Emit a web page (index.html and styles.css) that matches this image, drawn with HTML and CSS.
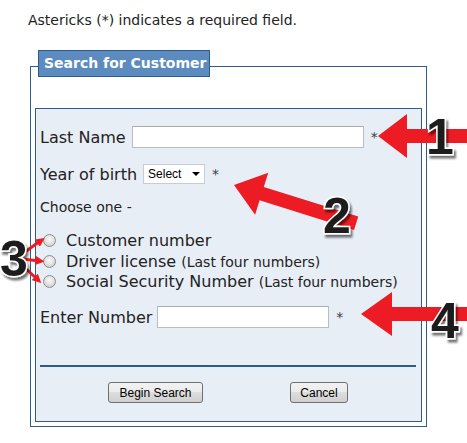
FILE: index.html
```html
<!DOCTYPE html>
<html lang="en">
<head>
<meta charset="utf-8">
<title>Search for Customer</title>
<link rel="stylesheet" href="styles.css">
</head>
<body>
<p class="note">Astericks (*) indicates a required field.</p>
<div class="outer">
  <div class="legend">Search for Customer</div>
  <form class="inner">
    <div class="row r-last">
      <label class="lbl">Last Name</label>
      <input class="text w-last" type="text">
      <span class="req">*</span>
    </div>
    <div class="row r-year">
      <label class="lbl">Year of birth</label>
      <span class="select-wrap"><select class="select"><option>Select</option></select></span>
      <span class="req">*</span>
    </div>
    <div class="choose">Choose one -</div>
    <div class="radios">
      <label class="radio"><input type="radio" name="idtype"><span>Customer number</span></label>
      <label class="radio"><input type="radio" name="idtype"><span>Driver license <small>(Last four numbers)</small></span></label>
      <label class="radio"><input type="radio" name="idtype"><span>Social Security Number <small>(Last four numbers)</small></span></label>
    </div>
    <div class="row r-num">
      <label class="lbl lbl-num">Enter Number</label>
      <input class="text w-num" type="text">
      <span class="req">*</span>
    </div>
    <hr class="sep">
    <div class="buttons">
      <button class="btn b-search" type="button">Begin Search</button>
      <button class="btn b-cancel" type="button">Cancel</button>
    </div>
  </form>
</div>
<svg class="annot" viewBox="0 0 467 443" xmlns="http://www.w3.org/2000/svg">
  <defs>
    <filter id="sh" x="-30%" y="-30%" width="160%" height="160%">
      <feDropShadow dx="2" dy="3" stdDeviation="1.2" flood-color="#000" flood-opacity="0.55"/>
    </filter>
    <marker id="ah" markerWidth="3" markerHeight="3" refX="1.5" refY="1.5" orient="auto" markerUnits="strokeWidth">
      <path d="M0 0 L3 1.5 L0 3 Z" fill="#ed1c24"/>
    </marker>
  </defs>
  <path class="arrow" transform="translate(378 136)" d="M0 0 L29 -22 L29 -7 L100 -7 L100 7 L29 7 L29 22 Z"/>
  <path class="arrow" transform="translate(234 185) rotate(17.4)" d="M0 0 L29 -22 L29 -7 L128 -7 L128 7 L29 7 L29 22 Z"/>
  <path class="arrow" transform="translate(361 314)" d="M0 0 L31 -22 L31 -7 L120 -7 L120 7 L31 7 L31 22 Z"/>
  <path class="small-arrow" d="M22 254 L41 240.5" marker-end="url(#ah)"/>
  <path class="small-arrow" d="M22 259 L40 261" marker-end="url(#ah)"/>
  <path class="small-arrow" d="M22 265 L38 280" marker-end="url(#ah)"/>
  <text class="digit" x="440" y="154" filter="url(#sh)">1</text>
  <text class="digit" x="337" y="233" filter="url(#sh)">2</text>
  <text class="digit" x="14" y="276" filter="url(#sh)">3</text>
  <text class="digit" x="445" y="338" filter="url(#sh)">4</text>
</svg>
</body>
</html>
```
FILE: styles.css
```css
body {
  margin: 0;
  position: relative;
  width: 467px;
  height: 443px;
  overflow: hidden;
  background: #fff;
  color: #222;
  font-family: "DejaVu Sans", Verdana, sans-serif;
}

.note {
  margin: 12px 0 0 28px;
  font-size: 14px;
  line-height: 17px;
}

.outer {
  position: relative;
  margin: 37px 0 0 30px;
  width: 397px;
  box-sizing: border-box;
  border: 1px solid #2f5b88;
  padding: 41px 4px 4px;
}

.legend {
  position: absolute;
  top: -17px;
  left: 7px;
  width: 172px;
  height: 27px;
  box-sizing: border-box;
  border: 1px solid #2f5b88;
  background: #5b8bbf;
  color: #fff;
  font-weight: bold;
  font-size: 14px;
  line-height: 25px;
  padding-left: 5px;
}

.inner {
  margin: 0;
  box-sizing: border-box;
  height: 314px;
  border: 1px solid #2f5b88;
  background: #e8eef6;
  padding: 17px 5px 0 4px;
  display: flex;
  flex-direction: column;
}

.row {
  display: flex;
  align-items: center;
  font-size: 16px;
}

.lbl {
  margin-right: 6px;
}

.lbl-num {
  margin-right: 5px;
}

.text {
  box-sizing: border-box;
  height: 22px;
  margin: 0;
  padding: 0 3px;
  border: 1px solid #b9bcc3;
  border-top-color: #a9acb3;
  background: #fff;
  border-radius: 0;
}

.w-last {
  width: 232px;
}

.w-num {
  width: 172px;
}

.req {
  margin-left: 7px;
  font-size: 14px;
  color: #3a3d4a;
}

.r-last {
  height: 22px;
}

.r-year {
  height: 20px;
  margin-top: 16px;
}

.select-wrap {
  position: relative;
  display: inline-block;
  height: 20px;
}

.select {
  -webkit-appearance: none;
  appearance: none;
  display: block;
  width: 62px;
  height: 20px;
  box-sizing: border-box;
  margin: 0;
  padding: 0 0 0 4px;
  border: 1px solid #c8cbd1;
  border-radius: 0;
  background: #fff;
  color: #000;
  font-family: "Liberation Sans", Arial, sans-serif;
  font-size: 12px;
}

.select-wrap::after {
  content: "";
  position: absolute;
  right: 5px;
  top: 8px;
  border-left: 4px solid transparent;
  border-right: 4px solid transparent;
  border-top: 4px solid #000;
}

.choose {
  margin-top: 13px;
  font-size: 14px;
  line-height: 20px;
}

.radios {
  margin-top: 13.5px;
  display: flex;
  flex-direction: column;
}

.radio {
  display: flex;
  align-items: center;
  height: 20.5px;
  font-size: 16px;
}

.radio input {
  -webkit-appearance: none;
  appearance: none;
  box-sizing: border-box;
  width: 13px;
  height: 13px;
  margin: 0 10px 0 3px;
  border-radius: 50%;
  border: 1px solid #8e8f8f;
  background: radial-gradient(circle at 50% 40%, #fafafa 0, #e4e4e4 45%, #c2c2c2 100%);
}

.radio small {
  font-size: 14px;
}

.r-num {
  height: 22px;
  margin-top: 14px;
}

.sep {
  margin: 37px 0 0;
  border: 0;
  height: 2px;
  background: #2f5b88;
}

.buttons {
  display: flex;
  margin-top: 15px;
  padding-left: 68px;
  gap: 87px;
}

.btn {
  height: 21px;
  box-sizing: border-box;
  margin: 0;
  padding: 0;
  border: 1px solid #707070;
  border-radius: 3px;
  background: linear-gradient(#f2f2f2 0%, #ebebeb 50%, #dddddd 50%, #cfcfcf 100%);
  color: #000;
  font-family: "Liberation Sans", Arial, sans-serif;
  font-size: 12px;
}

.b-search {
  width: 95px;
}

.b-cancel {
  width: 58px;
}

.annot {
  position: absolute;
  left: 0;
  top: 0;
  width: 467px;
  height: 443px;
  pointer-events: none;
}

.arrow {
  fill: #ed1c24;
}

.small-arrow {
  fill: none;
  stroke: #ed1c24;
  stroke-width: 3;
}

.digit {
  font-family: "Liberation Sans", Arial, sans-serif;
  font-weight: bold;
  font-size: 50px;
  text-anchor: middle;
  fill: #1e1e1e;
  stroke: #fff;
  stroke-width: 3;
  paint-order: stroke;
}
```
